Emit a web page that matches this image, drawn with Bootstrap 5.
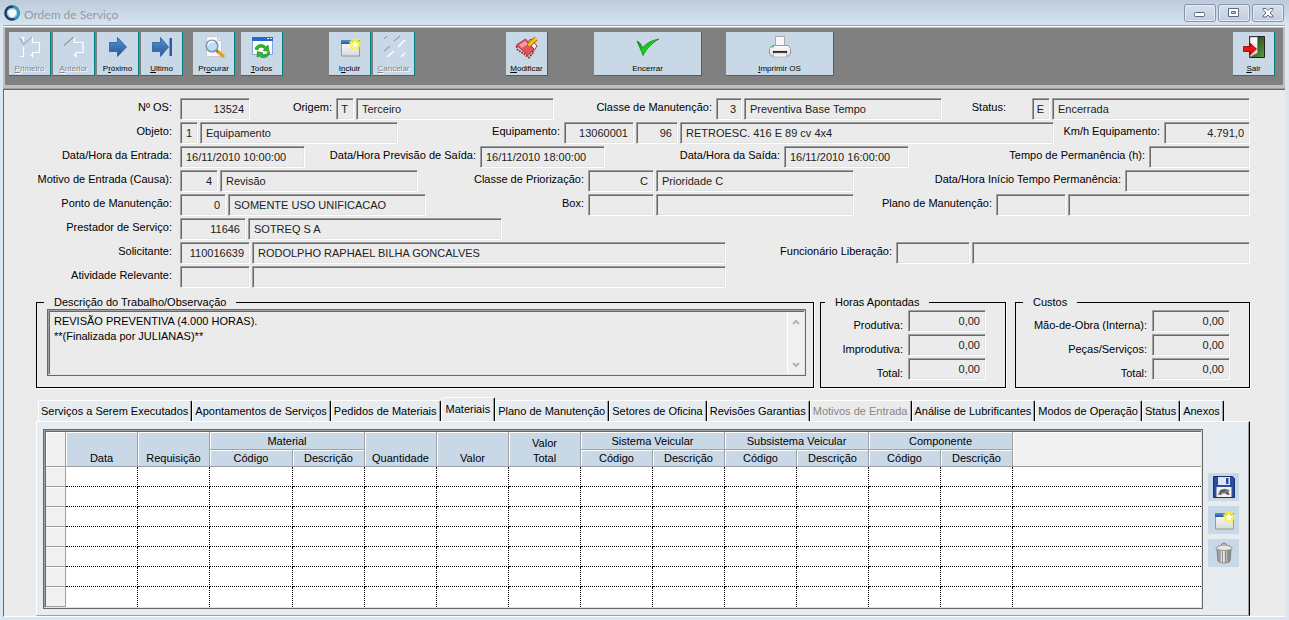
<!DOCTYPE html>
<html lang="pt-BR">
<head>
<meta charset="utf-8">
<meta name="viewport" content="width=device-width, initial-scale=1">
<title>Ordem de Serviço</title>
<link href="https://cdn.jsdelivr.net/npm/bootstrap@5.3.0/dist/css/bootstrap.min.css" rel="stylesheet">
<style>
  :root { --face: #ebebeb; --sky: #c9d8e7; --tab: #e7ecf0; --dark: #696969; --mid: #a0a0a0; }
  body { font: 11px/12px "Liberation Sans", Arial, sans-serif; color: #000; background: #dce6f1; }
  input, textarea, button { font: inherit; color: inherit; }

  /* Window frame */
  .title-bar { height: 25px; background: linear-gradient(#bccad9, #d7e4f2); padding: 0 5px 0 4px; }
  .title-bar h1 { font: 12px/16px Lato, sans-serif; color: #949ba3; }
  .win-btn { width: 32px; height: 18px; padding: 0; border: 1px solid #8793ab; border-radius: 3px; background: linear-gradient(#d5e0ec, #c0cedd); box-shadow: inset 0 0 0 1px #e4ecf5; }
  .tool-frame { margin: 0 4px 0 3px; border-top: 1px solid #a0a0a0; border-bottom: 1px solid #a0a0a0; background: #c0c0c0; box-shadow: inset 0 1px #fff; padding: 2px 2px 3px 2px; }
  .tool-strip { background: #808080; height: 57px; padding: 4px 8px 0 4px; }
  .tool-strip, .win-btns { gap: 2px; }
  .tool-btn { width: 42px; height: 44px; padding: 3px 0 0; border: solid #008080; border-width: 0 1px 1px 0; background: var(--sky); font-size: 8px; line-height: 10px; }
  .tool-btn svg { width: 24px; height: 24px; margin-bottom: 5px; }
  .tool-btn:disabled { color: #868686; text-shadow: 1px 1px #fff; }
  .tool-wide { width: 108px; }
  .gap-s { margin-left: 4px; }
  .gap-m { margin-left: 8px; }
  .gap-l { margin-left: 22px; }
  .gap-xl { margin-left: 44px; }
  .gap-xxl { margin-left: 89px; }
  .client { background: var(--face); border-left: 1px solid var(--dark); border-top: 1px solid var(--dark); border-bottom: 1px solid #fff; margin: 0 4px 3px 3px; padding: 8px 35px 0 32px; }

  /* Form */
  .form-line { display: grid; column-gap: 2px; height: 22px; margin-bottom: 2px; }
  .form-line label { text-align: right; white-space: nowrap; line-height: 18px; padding-right: 2px; min-width: 0; }
  .form-line label:first-child { padding-right: 6px; }
  .line-os { grid-template-columns: 142px 70px 82fr 18px 198px 158fr 26px 198px 86fr 18px 198px; }
  .line-equip { grid-template-columns: 142px 18px 198px 162fr 70px 42px 374px 106fr 86px; }
  .line-dates { grid-template-columns: 142px 125px 171fr 125px 175fr 125px 236fr 101px; }
  .line-cause { grid-template-columns: 142px 38px 198px 166fr 66px 198px 267fr 125px; }
  .line-point { grid-template-columns: 142px 46px 198px 158fr 66px 198px 138fr 70px 182px; }
  .line-prov { grid-template-columns: 142px 66px 254px 1fr; }
  .line-req { grid-template-columns: 142px 70px 474px 166fr 74px 278px; }
  .field { min-width: 0; width: 100%; height: 22px; padding: 0 3px 0 5px; border: 1px solid; border-color: var(--mid) #fff #fff var(--mid); border-radius: 0; background: var(--face); color: #222; box-shadow: inset 1px 1px var(--dark), inset -1px -1px #e3e3e3; outline: 0; }
  .field.num { text-align: right; padding: 0 5px 0 2px; }

  /* Group boxes */
  .group-row { padding-top: 6px; }
  .group { border: 1px solid #000; box-shadow: 1px 1px #fff; height: 92px; margin: 0; padding: 1px 7px 0 7px; min-width: 0; }
  .group legend { font-size: 11px; line-height: 12px; height: 12px; margin: 0; padding: 0 10px; }
  .group-notes { margin-right: 6px; }
  .group-notes .sunken { margin-left: 3px; }
  .group-hours { width: 186px; margin-right: 9px; }
  .group-costs { width: 235px; }
  .group-hours, .group-costs { padding: 2px 19px 0 4px; }
  .group-costs { padding-left: 7px; }
  .sum-line { display: grid; grid-template-columns: 1fr 78px; column-gap: 5px; height: 22px; margin-bottom: 2px; }
  .sum-line label { text-align: right; padding-top: 9px; white-space: nowrap; }
  .sunken { border: 1px solid var(--dark); }
  .sunken-in { border: 1px solid; border-color: var(--mid) #e3e3e3 #e3e3e3 var(--mid); box-shadow: inset 1px 1px var(--dark); padding: 1px 0 0 1px; }
  .notes { border: 0; padding: 2px 4px; resize: none; line-height: 15px; height: 62px; background: transparent; outline: 0; overflow: hidden; }
  .scroll-col { width: 17px; background: #f0f0f0; border-left: 1px solid #fff; padding: 7px 0 6px; }

  /* Tabs */
  .tab-strip { margin: 10px 25px 0 2px; height: 23px; border: 0; }
  .tab-strip .nav-link { border: solid; border-width: 1px; border-color: #fff #000 transparent #fff; border-bottom: 0; border-radius: 2px 2px 0 0; height: 21px; margin: 0; padding: 0 3px 0 2px; color: #000; background: var(--tab); line-height: 12px; white-space: nowrap; box-shadow: inset -1px 0 var(--mid); }
  .tab-strip .nav-link.active { height: 24px; padding: 0 4px 2px 4px; background: var(--tab); color: #000; border-color: #fff #000 transparent #fff; position: relative; z-index: 1; }
  .tab-strip .nav-link:disabled { color: #868686; border-color: #fff #000 transparent #fff; }
  .panel { background: var(--tab); border: solid; border-width: 1px 1px 1px 1px; border-color: #fff #000 var(--mid) #fff; box-shadow: inset -1px 0 var(--mid); padding: 7px 10px 6px 6px; }

  /* Data grid */
  .grid-table { width: 100%; table-layout: fixed; border-collapse: separate; border-spacing: 0; background: #fff; }
  .grid-table th, .grid-table td { padding: 0; overflow: hidden; }
  .grid-table thead th { background: var(--sky); font-weight: 400; text-align: center; vertical-align: bottom; border: solid var(--mid); border-width: 0 1px 1px 0; box-shadow: inset 1px 1px #fff; line-height: 15px; }
  .grid-table thead tr { height: 18px; }
  .grid-table thead tr + tr { height: 17px; }
  .grid-table thead .filler { background: #f0f0f0; }
  .grid-table thead .corner { background: #f0f0f0; }
  .grid-table tbody tr { height: 20px; }
  .grid-table tbody td { border: dotted #000; border-width: 0 1px 1px 0; }
  .grid-table tbody td:last-child { border-right: 0; }
  .grid-table tbody tr:last-child td { border-bottom: 0; }
  .grid-table tbody th { background: #f0f0f0; border: solid var(--mid); border-width: 0 1px 1px 0; box-shadow: inset 0 1px #fff; }
  .c-mark { width: 20px; } .c-std { width: 72px; } .c-wide { width: 83px; } .c-rest { width: auto; }
  .side-tools { padding-top: 44px; margin-left: 5px; gap: 5px; }
  .side-btn { width: 31px; height: 28px; padding: 0; border: 0; background: var(--sky); }
  .side-btn svg { width: 24px; height: 24px; }
</style>
</head>
<body class="d-flex flex-column min-vh-100">

<svg class="position-absolute" width="0" height="0" aria-hidden="true">
  <linearGradient id="gBlue" x2="0" y2="1"><stop stop-color="#5a90cf"/><stop offset="1" stop-color="#24579c"/></linearGradient>
  <linearGradient id="gGreen" x2="1" y2="1"><stop stop-color="#0a8a0a"/><stop offset=".5" stop-color="#12d812"/><stop offset="1" stop-color="#0a6a0a"/></linearGradient>
  <linearGradient id="gPaper" x2="0" y2="1"><stop stop-color="#fff"/><stop offset="1" stop-color="#d9d9d6"/></linearGradient>
  <linearGradient id="gSteel"><stop stop-color="#8a8a88"/><stop offset=".4" stop-color="#f4f4f2"/><stop offset="1" stop-color="#7a7a78"/></linearGradient>
  <linearGradient id="gDoor" x2="1" y2="1"><stop stop-color="#123010"/><stop offset="1" stop-color="#5f9a45"/></linearGradient>
  <symbol id="newWin" viewBox="0 0 24 24">
    <path d="M3.500 5.500h18v15.500h-18z" fill="url(#gPaper)" stroke="#9a9a98"/>
    <path d="M3 5h19v4H3z" fill="url(#gBlue)"/>
    <circle cx="17" cy="9" r="5.500" fill="#fbf36a" opacity=".75"/>
    <path d="M17 2l1.600 4.300 5 .4-3.600 3.200 1.200 4.900-4.200-2.600-4.200 2.600 1.200-4.900L10.500 6.700l5-.4z" fill="#f5ee10"/>
    <path d="M17 5l1.100 3 3.200.2-2.500 2 .9 3.100-2.700-1.800-2.700 1.800.9-3.100-2.500-2 3.200-.2z" fill="#fffff0"/>
  </symbol>
</svg>

<header class="title-bar d-flex align-items-center">
  <svg width="16" height="16" viewBox="0 0 16 16" aria-hidden="true"><circle cx="8" cy="8" r="7.800" fill="#173c66"/><path d="M8 .2a7.800 7.800 0 0 1 2 15.300L12 8z" fill="#2b9fbc"/><circle cx="8" cy="8" r="5.300" fill="#a9c4dd"/><path d="M4 6.500C6 4 10 4 12 6c.5 3-1 6-4 6.500-2-.5-4-3-4-6z" fill="#f4fbff"/></svg>
  <h1 class="mb-0 ms-1 pt-1 me-auto">Ordem de Serviço</h1>
  <div class="win-btns d-flex">
    <button class="win-btn d-flex align-items-center justify-content-center" aria-label="Minimizar"><svg width="12" height="12"><rect x=".5" y="5.500" width="10" height="4" rx="1" fill="#fff" stroke="#60687a"/></svg></button>
    <button class="win-btn d-flex align-items-center justify-content-center" aria-label="Maximizar"><svg width="12" height="12"><path d="M.5 1.500h10v8H.5z" fill="#fff" stroke="#60687a"/><path d="M3.500 4.500h4v2h-4z" fill="#c9d5e2" stroke="#60687a"/></svg></button>
    <button class="win-btn d-flex align-items-center justify-content-center" aria-label="Fechar"><svg width="12" height="12"><path d="M1 1.500h3l2 2 2-2h3v1L8 6l3 3v1H8L6 8l-2 2H1V9l3-3-3-3.500z" fill="#fff" stroke="#60687a"/></svg></button>
  </div>
</header>

<div class="tool-frame">
  <div class="tool-strip d-flex" role="toolbar" aria-label="Ações">
    <button class="tool-btn d-flex flex-column align-items-center" disabled><svg viewBox="0 0 24 24" fill="none"><path d="M2.500 2.500H5.500V6M5.500 12v8.500M2.500 21.500H6" stroke="#fff" stroke-width="1.200"/><path d="M1.500 2.500l4 7 8.500-7.500" stroke="#999"/><path d="M14.500 2v5.500h7v10h-7v4l-2-2" stroke="#fff" stroke-width="1.200"/></svg><span><u>P</u>rimeiro</span></button>
    <button class="tool-btn d-flex flex-column align-items-center" disabled><svg viewBox="0 0 24 24" fill="none"><path d="M2 10.500L11.500 2" stroke="#999" stroke-width="1.200"/><path d="M12.500 2.500v5h8.500v10h-7v4l-2-2" stroke="#fff" stroke-width="1.200"/></svg><span><u>A</u>nterior</span></button>
    <button class="tool-btn d-flex flex-column align-items-center"><svg viewBox="0 0 24 24"><path d="M3.500 7.500h8v-5l9 9.500-9 9.500v-5h-8z" fill="url(#gBlue)" stroke="#3a6cab"/></svg><span>P<u>r</u>óximo</span></button>
    <button class="tool-btn d-flex flex-column align-items-center"><svg viewBox="0 0 24 24"><path d="M2.500 7.500h8v-5l8 9.500-8 9.500v-5h-8z" fill="url(#gBlue)" stroke="#3a6cab"/><path d="M19.500 3h2.500v18h-2.500z" fill="#2c5c9f"/></svg><span><u>U</u>ltimo</span></button>
    <button class="tool-btn gap-m d-flex flex-column align-items-center"><svg viewBox="0 0 24 24"><path d="M4.500 1.500h11l4 4v16h-15z" fill="#f6f8fb" stroke="#c3ccd9"/><path d="M15.500 1.500v4h4" fill="#dfe6ef" stroke="#c3ccd9"/><path d="M15 16l6 5" stroke="#e69a27" stroke-width="3.500" stroke-linecap="round"/><path d="M14 15l2 2" stroke="#777" stroke-width="2"/><circle cx="10" cy="11" r="5.800" fill="#bfdcf8" stroke="#7d93b1" stroke-width="1.500"/><path d="M6 10a4 4 0 0 1 6-3" fill="none" stroke="#fff" stroke-width="1.500"/></svg><span>Pr<u>o</u>curar</span></button>
    <button class="tool-btn gap-s d-flex flex-column align-items-center"><svg viewBox="0 0 24 24"><path d="M2.500 2.500h20v17h-20z" fill="#fff" stroke="#7da7df"/><path d="M2 2h21v4H2z" fill="#2467cf"/><path d="M17 3h2v1h-2zM20 3h2v1h-2z" fill="#fff"/><path d="M5 14c1-5 8-6 11-2l2-2 1 6.500-6-1 2-1.500c-3-3-7-2-7 1zM20 17c-1 6-8 7-10.500 4l-2.500 1 .5-5.500 5.500 1.500-2 1c2 2 5 1.500 6-1z" fill="#2bc022" stroke="#0a7c0a" stroke-width=".6"/></svg><span><u>T</u>odos</span></button>
    <button class="tool-btn gap-xl d-flex flex-column align-items-center"><svg><use href="#newWin"/></svg><span>I<u>n</u>cluir</span></button>
    <button class="tool-btn d-flex flex-column align-items-center" disabled><svg viewBox="0 0 24 24" fill="none"><path d="M2 4l3-3M12 6l6-5M2 16l6-5" stroke="#888"/><path d="M16 12l7-7M5 22l7-6M19 22l4-4" stroke="#fff" stroke-width="1.500"/></svg><span><u>C</u>ancelar</span></button>
    <button class="tool-btn gap-xxl d-flex flex-column align-items-center"><svg viewBox="0 0 24 24"><path d="M16 4l6 7-4 6-8-8z" fill="#fff" stroke="#b02a38"/><path d="M1.500 10l9-6 8.500 10-6 6.500z" fill="#df5560" stroke="#b02a38"/><path d="M4 10l6-4 3 3-6 4z" fill="#f2a0a6"/><path d="M1.500 11l1 3.500 11.500 8 5-6" fill="none" stroke="#8c2b20" stroke-width="1.800" stroke-dasharray="1.800 1"/><path d="M13.500 10.500L21 3.500" stroke="#a66a00" stroke-width="4.500"/><path d="M13.500 10.500L21 3.500" stroke="#ffc21a" stroke-width="3"/></svg><span><u>M</u>odificar</span></button>
    <button class="tool-btn tool-wide gap-xl d-flex flex-column align-items-center"><svg viewBox="0 0 24 24"><path d="M1 6c3 1.500 4.500 3.500 5.500 7C10 8.500 15 5.500 23 4 16 8 11 13 7 20.500 5 15 3 11 1 6z" fill="url(#gGreen)" stroke="#0b7a0b" stroke-width=".7"/></svg><span>Encerrar</span></button>
    <button class="tool-btn tool-wide gap-l d-flex flex-column align-items-center"><svg viewBox="0 0 24 24"><path d="M7.500 1.500h9v9h-9z" fill="#f8f8f8" stroke="#aaa"/><path d="M4 10.500h16l2.500 3V19l-2 2h-17l-2-2v-5.500z" fill="url(#gPaper)" stroke="#999"/><path d="M5 16h14v2H5z" fill="#222"/><path d="M6 18h12l1 4H5z" fill="#f4f4f4" stroke="#aaa" stroke-width=".7"/><path d="M3 11h3v1.500H3z" fill="#5ccf4c"/></svg><span><u>I</u>mprimir OS</span></button>
    <button class="tool-btn ms-auto d-flex flex-column align-items-center"><svg viewBox="0 0 24 24"><path d="M7.500 1.500h15v21h-15z" fill="url(#gDoor)" stroke="#222"/><path d="M8 2h7.500v16L8 22z" fill="url(#gPaper)" stroke="#777" stroke-width=".6"/><path d="M1.500 11.500H8V8l6.500 6L8 20v-3.500H1.500z" fill="#ee1111" stroke="#8d0000" stroke-width=".8"/></svg><span><u>S</u>air</span></button>
  </div>
</div>

<main class="client flex-grow-1">
  <form>
    <div class="form-line line-os">
      <label for="os">Nº OS:</label><input id="os" class="field num" value="13524" readonly>
      <label for="origem">Origem:</label><input id="origem" class="field num" value="T" readonly><input class="field" value="Terceiro" aria-label="Descrição da origem" readonly>
      <label for="classe">Classe de Manutenção:</label><input id="classe" class="field num" value="3" readonly><input class="field" value="Preventiva Base Tempo" aria-label="Descrição da classe" readonly>
      <label for="status" class="pe-4">Status:</label><input id="status" class="field num" value="E" readonly><input class="field" value="Encerrada" aria-label="Descrição do status" readonly>
    </div>
    <div class="form-line line-equip">
      <label for="objeto">Objeto:</label><input id="objeto" class="field num" value="1" readonly><input class="field" value="Equipamento" aria-label="Descrição do objeto" readonly>
      <label for="equip">Equipamento:</label><input id="equip" class="field num" value="13060001" readonly><input class="field num" value="96" aria-label="Número do equipamento" readonly><input class="field" value="RETROESC. 416 E 89 cv 4x4" aria-label="Descrição do equipamento" readonly>
      <label for="km">Km/h Equipamento:</label><input id="km" class="field num" value="4.791,0" readonly>
    </div>
    <div class="form-line line-dates">
      <label for="entrada">Data/Hora da Entrada:</label><input id="entrada" class="field" value="16/11/2010 10:00:00" readonly>
      <label for="previsao">Data/Hora Previsão de Saída:</label><input id="previsao" class="field" value="16/11/2010 18:00:00" readonly>
      <label for="saida">Data/Hora da Saída:</label><input id="saida" class="field" value="16/11/2010 16:00:00" readonly>
      <label for="tempo">Tempo de Permanência (h):</label><input id="tempo" class="field" readonly>
    </div>
    <div class="form-line line-cause">
      <label for="motivo">Motivo de Entrada (Causa):</label><input id="motivo" class="field num" value="4" readonly><input class="field" value="Revisão" aria-label="Descrição do motivo" readonly>
      <label for="prior">Classe de Priorização:</label><input id="prior" class="field num" value="C" readonly><input class="field" value="Prioridade C" aria-label="Descrição da prioridade" readonly>
      <label for="inicio">Data/Hora Início Tempo Permanência:</label><input id="inicio" class="field" readonly>
    </div>
    <div class="form-line line-point">
      <label for="ponto">Ponto de Manutenção:</label><input id="ponto" class="field num" value="0" readonly><input class="field" value="SOMENTE USO UNIFICACAO" aria-label="Descrição do ponto" readonly>
      <label for="box">Box:</label><input id="box" class="field" readonly><input class="field" aria-label="Descrição do box" readonly>
      <label for="plano">Plano de Manutenção:</label><input id="plano" class="field" readonly><input class="field" aria-label="Descrição do plano" readonly>
    </div>
    <div class="form-line line-prov">
      <label for="prest">Prestador de Serviço:</label><input id="prest" class="field num" value="11646" readonly><input class="field" value="SOTREQ S A" aria-label="Nome do prestador" readonly>
    </div>
    <div class="form-line line-req">
      <label for="solic">Solicitante:</label><input id="solic" class="field num" value="110016639" readonly><input class="field" value="RODOLPHO RAPHAEL BILHA GONCALVES" aria-label="Nome do solicitante" readonly>
      <label for="func">Funcionário Liberação:</label><input id="func" class="field" readonly><input class="field" aria-label="Nome do funcionário" readonly>
    </div>
    <div class="form-line line-req">
      <label for="ativ">Atividade Relevante:</label><input id="ativ" class="field" readonly><input class="field" aria-label="Descrição da atividade" readonly>
    </div>

    <div class="group-row d-flex">
      <fieldset class="group group-notes flex-fill">
        <legend class="float-none w-auto">Descrição do Trabalho/Observação</legend>
        <div class="sunken"><div class="sunken-in d-flex">
          <textarea class="notes flex-fill" aria-label="Descrição do Trabalho/Observação" readonly>REVISÃO PREVENTIVA (4.000 HORAS).
**(Finalizada por JULIANAS)**</textarea>
          <div class="scroll-col d-flex flex-column justify-content-between align-items-center" aria-hidden="true">
            <svg width="8" height="6" fill="none"><path d="M1 5l3-3 3 3" stroke="#b4b4b4" stroke-width="2"/></svg>
            <svg width="8" height="6" fill="none"><path d="M1 1l3 3 3-3" stroke="#b4b4b4" stroke-width="2"/></svg>
          </div>
        </div></div>
      </fieldset>
      <fieldset class="group group-hours flex-shrink-0">
        <legend class="float-none w-auto">Horas Apontadas</legend>
        <div class="sum-line"><label for="h1">Produtiva:</label><input id="h1" class="field num" value="0,00" readonly></div>
        <div class="sum-line"><label for="h2">Improdutiva:</label><input id="h2" class="field num" value="0,00" readonly></div>
        <div class="sum-line"><label for="h3">Total:</label><input id="h3" class="field num" value="0,00" readonly></div>
      </fieldset>
      <fieldset class="group group-costs flex-shrink-0">
        <legend class="float-none w-auto">Custos</legend>
        <div class="sum-line"><label for="c1">Mão-de-Obra (Interna):</label><input id="c1" class="field num" value="0,00" readonly></div>
        <div class="sum-line"><label for="c2">Peças/Serviços:</label><input id="c2" class="field num" value="0,00" readonly></div>
        <div class="sum-line"><label for="c3">Total:</label><input id="c3" class="field num" value="0,00" readonly></div>
      </fieldset>
    </div>
  </form>

  <div class="tab-strip nav nav-tabs flex-nowrap align-items-end" role="tablist">
    <button class="nav-link" role="tab">Serviços a Serem Executados</button>
    <button class="nav-link" role="tab">Apontamentos de Serviços</button>
    <button class="nav-link" role="tab">Pedidos de Materiais</button>
    <button class="nav-link active" role="tab" aria-selected="true">Materiais</button>
    <button class="nav-link" role="tab">Plano de Manutenção</button>
    <button class="nav-link" role="tab">Setores de Oficina</button>
    <button class="nav-link" role="tab">Revisões Garantias</button>
    <button class="nav-link" role="tab" disabled>Motivos de Entrada</button>
    <button class="nav-link" role="tab">Análise de Lubrificantes</button>
    <button class="nav-link" role="tab">Modos de Operação</button>
    <button class="nav-link" role="tab">Status</button>
    <button class="nav-link" role="tab">Anexos</button>
  </div>

  <section class="panel d-flex align-items-start" role="tabpanel" aria-label="Materiais">
    <div class="sunken flex-fill"><div class="sunken-in">
      <table class="grid-table">
        <colgroup><col class="c-mark"><col class="c-std"><col class="c-std"><col class="c-wide"><col class="c-std"><col class="c-std"><col class="c-std"><col class="c-std"><col class="c-std"><col class="c-std"><col class="c-std"><col class="c-std"><col class="c-std"><col class="c-std"><col class="c-rest"></colgroup>
        <thead>
          <tr>
            <th rowspan="2" class="corner"></th><th rowspan="2">Data</th><th rowspan="2">Requisição</th><th colspan="2">Material</th><th rowspan="2">Quantidade</th><th rowspan="2">Valor</th><th rowspan="2">Valor<br>Total</th><th colspan="2">Sistema Veicular</th><th colspan="2">Subsistema Veicular</th><th colspan="2">Componente</th><th rowspan="2" class="filler border-end-0"></th>
          </tr>
          <tr><th>Código</th><th>Descrição</th><th>Código</th><th>Descrição</th><th>Código</th><th>Descrição</th><th>Código</th><th>Descrição</th></tr>
        </thead>
        <tbody>
          <tr><th></th><td></td><td></td><td></td><td></td><td></td><td></td><td></td><td></td><td></td><td></td><td></td><td></td><td></td><td></td></tr>
          <tr><th></th><td></td><td></td><td></td><td></td><td></td><td></td><td></td><td></td><td></td><td></td><td></td><td></td><td></td><td></td></tr>
          <tr><th></th><td></td><td></td><td></td><td></td><td></td><td></td><td></td><td></td><td></td><td></td><td></td><td></td><td></td><td></td></tr>
          <tr><th></th><td></td><td></td><td></td><td></td><td></td><td></td><td></td><td></td><td></td><td></td><td></td><td></td><td></td><td></td></tr>
          <tr><th></th><td></td><td></td><td></td><td></td><td></td><td></td><td></td><td></td><td></td><td></td><td></td><td></td><td></td><td></td></tr>
          <tr><th></th><td></td><td></td><td></td><td></td><td></td><td></td><td></td><td></td><td></td><td></td><td></td><td></td><td></td><td></td></tr>
          <tr><th></th><td></td><td></td><td></td><td></td><td></td><td></td><td></td><td></td><td></td><td></td><td></td><td></td><td></td><td></td></tr>
        </tbody>
      </table>
    </div></div>
    <div class="side-tools d-flex flex-column">
      <button class="side-btn d-flex align-items-center justify-content-center" aria-label="Salvar"><svg viewBox="0 0 24 24"><path d="M1.500 1.500h19l2 2v19h-21z" fill="#2b4fa0" stroke="#16306f"/><path d="M6 2h12v8H6z" fill="#dfe6f3"/><path d="M14 3h2.500v6H14z" fill="#2b4fa0"/><path d="M4.500 12h15v10h-15z" fill="#f2f2ee"/><path d="M6 20c1-5 4-7 8-6l4 1-2 2 2 3h-3l-2-3-4 1 1 2z" fill="#777"/><path d="M8 16h5M8 18h9" stroke="#333" stroke-width=".8"/></svg></button>
      <button class="side-btn d-flex align-items-center justify-content-center" aria-label="Novo"><svg><use href="#newWin"/></svg></button>
      <button class="side-btn d-flex align-items-center justify-content-center" aria-label="Excluir"><svg viewBox="0 0 24 24"><path d="M5 8h14l-1 12c-1 2.500-11 2.500-12 0z" fill="url(#gSteel)" stroke="#6f6f6d" stroke-width=".8"/><path d="M8 10v10M10.500 10v11M13.500 10v11M16 10v10" stroke="#777" stroke-width=".8"/><path d="M4 7.500C5 5 9 4 12 4s7 1 8 3.500-15 2.500-16 0z" fill="#e6e6e3" stroke="#777" stroke-width=".8"/><path d="M9.500 4c0-2.500 5-2.500 5 0" fill="none" stroke="#777"/></svg></button>
    </div>
  </section>
</main>

<script src="https://cdn.jsdelivr.net/npm/bootstrap@5.3.0/dist/js/bootstrap.bundle.min.js"></script>
</body>
</html>
